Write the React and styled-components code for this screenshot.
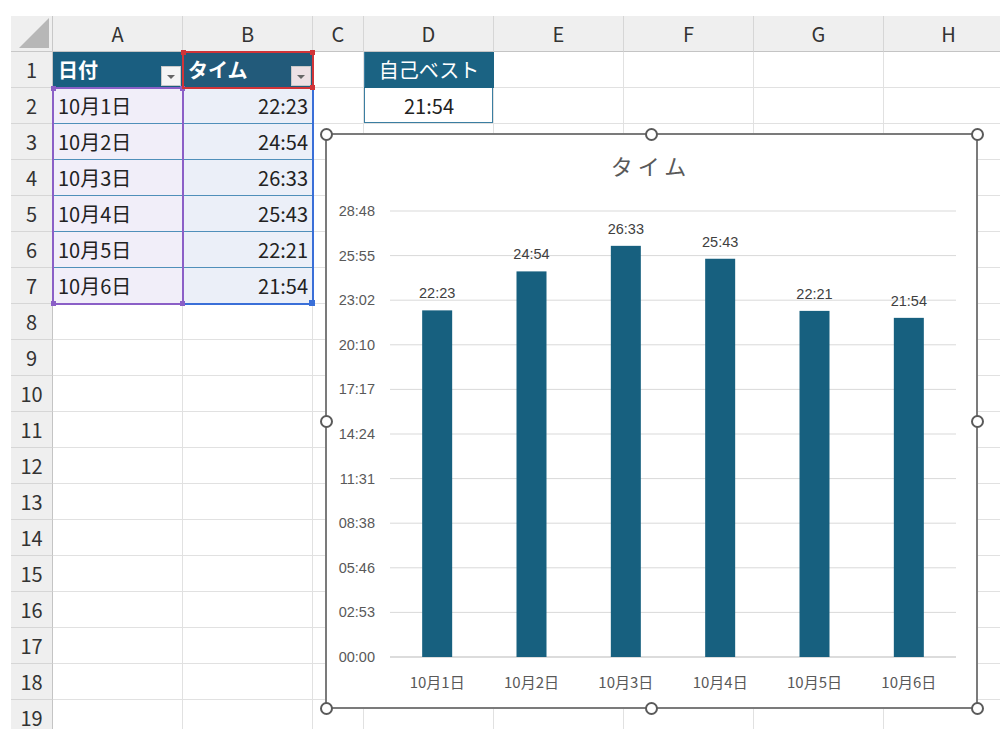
import React from 'react';
import styled, { createGlobalStyle } from 'styled-components';

const GlobalStyle = createGlobalStyle`
  html, body {
    margin: 0;
    padding: 0;
    background: #fff;
  }
  * {
    box-sizing: border-box;
  }
`;

const COLS = [
  { name: 'A', w: 130 },
  { name: 'B', w: 130 },
  { name: 'C', w: 51 },
  { name: 'D', w: 130 },
  { name: 'E', w: 130 },
  { name: 'F', w: 130 },
  { name: 'G', w: 130 },
  { name: 'H', w: 130 },
];
const ROWS = 19;

const DATA = [
  { day: '10月1日', time: '22:23' },
  { day: '10月2日', time: '24:54' },
  { day: '10月3日', time: '26:33' },
  { day: '10月4日', time: '25:43' },
  { day: '10月5日', time: '22:21' },
  { day: '10月6日', time: '21:54' },
];

const Page = styled.div`
  width: 1000px;
  height: 729px;
  overflow: hidden;
  padding: 16px 0 0 11px;
  font-family: "Noto Sans CJK JP", "Noto Sans", sans-serif;
`;

const SheetArea = styled.div`
  position: relative;
  width: max-content;
`;

const Grid = styled.div`
  display: grid;
  grid-template-columns: 42px ${COLS.map(c => c.w + 'px').join(' ')};
  grid-auto-rows: 36px;
`;

const Corner = styled.div`
  position: relative;
  background: #efefef;
  border-right: 1px solid #c8c8c8;
  border-bottom: 1px solid #c8c8c8;
  &::after {
    content: '';
    position: absolute;
    right: 3px;
    bottom: 3px;
    width: 30px;
    height: 30px;
    background: #b7b7b7;
    clip-path: polygon(100% 0, 100% 100%, 0 100%);
  }
`;

const ColHead = styled.div`
  background: #efefef;
  border-right: 1px solid #d6d6d6;
  border-bottom: 1px solid #c4c4c4;
  display: flex;
  align-items: center;
  justify-content: center;
  font-size: 20px;
  color: #333;
`;

const RowHead = styled.div`
  background: #efefef;
  border-right: 1px solid #c4c4c4;
  border-bottom: 1px solid #d6d6d6;
  display: flex;
  align-items: center;
  justify-content: center;
  font-size: 20px;
  color: #333;
`;

const variants = {
  plain: `background: #fff;`,
  head: `
    background: #1a5e80;
    color: #fff;
    font-weight: 700;
    border-right-color: #1a5e80;
    border-bottom-color: #1a5e80;
  `,
  headSel: `
    background: #225a7a;
    color: #fff;
    font-weight: 700;
    border-right-color: #225a7a;
    border-bottom-color: #225a7a;
  `,
  dataA: `
    background: #f1eef9;
    color: #222;
    border-right-color: #f1eef9;
    border-bottom-color: #4f8fba;
  `,
  dataB: `
    background: #ebeff8;
    color: #222;
    border-right-color: #ebeff8;
    border-bottom-color: #4f8fba;
  `,
  bestHead: `
    background: #1b6383;
    color: #fff;
    border-right-color: #1b6383;
    border-bottom-color: #1b6383;
    box-shadow: inset 1px 0 #3b7ea1;
  `,
  best: `
    background: #fff;
    color: #222;
    box-shadow: inset 1px 0 #3b7ea1, inset -1px 0 #3b7ea1, inset 0 -1px #3b7ea1;
  `,
};

const Cell = styled.div`
  display: flex;
  align-items: center;
  justify-content: ${p => (p.$align === 'right' ? 'flex-end' : p.$align === 'center' ? 'center' : 'flex-start')};
  padding: 0 4px 0 5px;
  font-size: 20px;
  white-space: nowrap;
  border-right: 1px solid #e1e1e1;
  border-bottom: 1px solid #e1e1e1;
  ${p => variants[p.$variant || 'plain']}
`;

const FilterButton = styled.span`
  margin-left: auto;
  align-self: flex-end;
  margin-bottom: 1px;
  margin-right: -3px;
  width: 20px;
  height: 20px;
  background: ${p => (p.$selected ? '#ede1e5' : '#f5f5f5')};
  border: 1px solid #c9c9c9;
  display: flex;
  align-items: center;
  justify-content: center;
  &::after {
    content: '';
    border-left: 4px solid transparent;
    border-right: 4px solid transparent;
    border-top: 4px solid #666;
    margin-top: 2px;
  }
`;

const Selection = styled.div`
  position: absolute;
  left: ${p => p.$x}px;
  top: ${p => p.$y}px;
  width: ${p => p.$w}px;
  height: ${p => p.$h}px;
  border: 2px solid ${p => p.$color};
  pointer-events: none;
`;

const SelCorner = styled.span`
  position: absolute;
  width: ${p => p.$size || 5}px;
  height: ${p => p.$size || 5}px;
  background: ${p => p.$color};
  ${p => (p.$v === 'top' ? 'top: -3px;' : 'bottom: -3px;')}
  ${p => (p.$h === 'left' ? 'left: -3px;' : 'right: -3px;')}
`;

const ChartFrame = styled.div`
  position: absolute;
  left: 314px;
  top: 117px;
  width: 653px;
  height: 576px;
  background: #fff;
  border: 2px solid #7b7b7b;
`;

const PlotSvg = styled.svg`
  display: block;
  width: 100%;
  height: 100%;
  font-family: "Liberation Sans", "Noto Sans CJK JP", sans-serif;
`;

const Handle = styled.span`
  position: absolute;
  left: ${p => p.$x}px;
  top: ${p => p.$y}px;
  width: 13px;
  height: 13px;
  margin: -6.5px 0 0 -6.5px;
  border-radius: 50%;
  background: #fff;
  border: 2px solid #5a5a5a;
`;

function cellFor(r, c) {
  const col = COLS[c].name;
  if (r === 1) {
    if (col === 'A') return { v: 'head', text: '日付', filter: true };
    if (col === 'B') return { v: 'headSel', text: 'タイム', filter: true, sel: true };
    if (col === 'D') return { v: 'bestHead', text: '自己ベスト', align: 'center' };
  }
  if (r >= 2 && r <= 7) {
    const d = DATA[r - 2];
    if (col === 'A') return { v: 'dataA', text: d.day };
    if (col === 'B') return { v: 'dataB', text: d.time, align: 'right' };
  }
  if (r === 2 && col === 'D') return { v: 'best', text: '21:54', align: 'center' };
  return { v: 'plain', text: '' };
}

const toSec = t => {
  const [m, s] = t.split(':').map(Number);
  return m * 60 + s;
};

const Y_TICKS = ['00:00', '02:53', '05:46', '08:38', '11:31', '14:24', '17:17', '20:10', '23:02', '25:55', '28:48'];

function Chart() {
  // svg origin = page (327, 135)
  const x0 = 63;
  const x1 = 629;
  const y0 = 522;
  const plotH = 446;
  const max = 28 * 60 + 48;
  const step = (x1 - x0) / DATA.length;

  return (
    <ChartFrame>
      <PlotSvg viewBox="0 0 649 572">
        <text x="324" y="40" textAnchor="middle" fontSize="22" fill="#595959"
          letterSpacing="5" fontFamily="Noto Sans CJK JP, sans-serif">タイム</text>
        {Y_TICKS.map((t, i) => {
          const y = y0 - (plotH / 10) * i;
          return (
            <g key={t}>
              <line x1={x0} x2={x1} y1={y} y2={y} stroke={i === 0 ? '#d0d0d0' : '#d9d9d9'} strokeWidth={i === 0 ? 1.5 : 1} />
              <text x="48" y={y + 5} textAnchor="end" fontSize="14.5" fill="#595959">{t}</text>
            </g>
          );
        })}
        {DATA.map((d, i) => {
          const cx = x0 + step * (i + 0.5);
          const h = (toSec(d.time) / max) * plotH;
          return (
            <g key={d.day}>
              <rect x={cx - 15} y={y0 - h} width="30" height={h} fill="#17607f" />
              <text x={cx} y={y0 - h - 12} textAnchor="middle" fontSize="14.5" fill="#404040">{d.time}</text>
              <text x={cx} y={553} textAnchor="middle" fontSize="15" fill="#595959"
                fontFamily="Noto Sans CJK JP, sans-serif">{d.day}</text>
            </g>
          );
        })}
      </PlotSvg>
      {[-1, 324.5, 650].map(x =>
        [-1, 286, 573].map(y =>
          x === 324.5 && y === 286 ? null : <Handle key={x + '-' + y} $x={x} $y={y} />
        )
      )}
    </ChartFrame>
  );
}

export default function App() {
  const cells = [];
  cells.push(<Corner key="corner" />);
  COLS.forEach(c => cells.push(<ColHead key={'h' + c.name}>{c.name}</ColHead>));
  for (let r = 1; r <= ROWS; r++) {
    cells.push(<RowHead key={'r' + r}>{r}</RowHead>);
    COLS.forEach((c, ci) => {
      const info = cellFor(r, ci);
      cells.push(
        <Cell key={c.name + r} $variant={info.v} $align={info.align}>
          {info.text}
          {info.filter && <FilterButton $selected={info.sel} />}
        </Cell>
      );
    });
  }

  return (
    <Page>
      <GlobalStyle />
      <SheetArea>
        <Grid>{cells}</Grid>
        <Selection $x={171} $y={71} $w={132} $h={218} $color="#3a6fd8">
          <SelCorner $v="bottom" $h="right" $size={6} $color="#3a6fd8" />
        </Selection>
        <Selection $x={41} $y={71} $w={132} $h={218} $color="#8b5fc7">
          <SelCorner $v="top" $h="left" $color="#8b5fc7" />
          <SelCorner $v="top" $h="right" $color="#8b5fc7" />
          <SelCorner $v="bottom" $h="left" $color="#8b5fc7" />
          <SelCorner $v="bottom" $h="right" $color="#8b5fc7" />
        </Selection>
        <Selection $x={171} $y={35} $w={132} $h={38} $color="#d13438">
          <SelCorner $v="top" $h="left" $color="#d13438" />
          <SelCorner $v="top" $h="right" $color="#d13438" />
          <SelCorner $v="bottom" $h="right" $color="#d13438" />
        </Selection>
        <Chart />
      </SheetArea>
    </Page>
  );
}
